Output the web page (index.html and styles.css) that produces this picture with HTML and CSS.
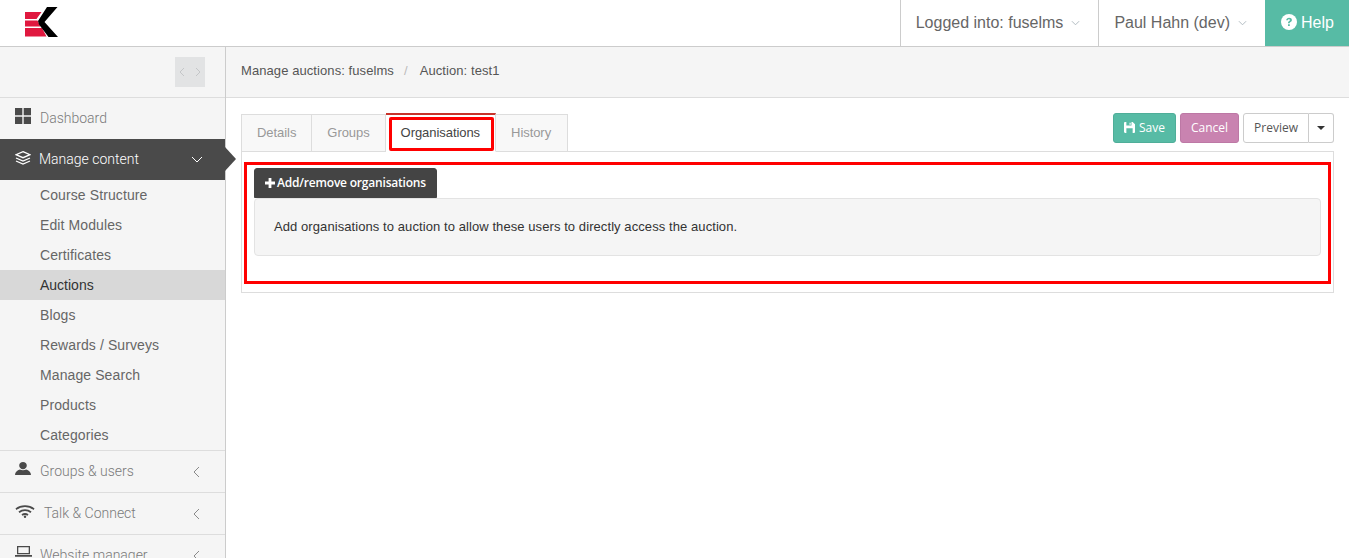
FILE: index.html
```html
<!DOCTYPE html>
<html lang="en">
<head>
<meta charset="utf-8">
<title>Manage auctions</title>
<link rel="stylesheet" href="styles.css">
</head>
<body>
<header class="topbar">
  <a class="logo" href="#" aria-label="Logo">
    <svg width="34" height="31" viewBox="0 0 34 31">
      <path class="logo-red" d="M0 5H16.500L11.500 12H0ZM0 13.500H12.500L15.500 19.500H0ZM0 21H17L21.500 29.500H0Z"/>
      <path class="logo-black" d="M22 0H32.500L19.500 15L33 30H23.500L14 17.500 13 14Z"/>
    </svg>
  </a>
  <div class="top-right">
    <div class="top-item">Logged into: fuselms
      <svg class="chev-sm" viewBox="0 0 10 6"><path d="M1 1l4 4 4-4"/></svg>
    </div>
    <div class="top-item">Paul Hahn (dev)
      <svg class="chev-sm" viewBox="0 0 10 6"><path d="M1 1l4 4 4-4"/></svg>
    </div>
    <div class="top-help">
      <svg class="help-icon" viewBox="0 0 16 16"><circle cx="8" cy="8" r="8"/><path class="help-q" d="M5.200 6.200C5.300 4.600 6.500 3.700 8.100 3.700c1.600 0 2.800.9 2.800 2.300 0 1.100-.6 1.600-1.400 2.100-.6.4-.8.6-.8 1.200H7c0-1.200.4-1.700 1.200-2.200.5-.3.8-.6.8-1 0-.5-.4-.8-1-.8-.7 0-1 .4-1.100 1ZM7 10.200h1.800V12H7Z"/></svg>
      Help
    </div>
  </div>
</header>
<div class="shell">
  <aside class="sidebar">
    <div class="side-top">
      <div class="collapse">
        <svg viewBox="0 0 6 10"><path d="M5 1L1 5l4 4"/></svg>
        <svg viewBox="0 0 6 10"><path d="M1 1l4 4-4 4"/></svg>
      </div>
    </div>
    <a class="nav-item" href="#">
      <svg class="nav-icon grid" viewBox="0 0 16 16"><path d="M0 0h7.300v7.300H0ZM8.700 0H16v7.300H8.700ZM0 8.700h7.300V16H0ZM8.700 8.700H16V16H8.700Z"/></svg>
      <span class="nav-label">Dashboard</span>
    </a>
    <a class="nav-item nav-active" href="#">
      <svg class="nav-icon layers" viewBox="0 0 16 14"><path d="M8 .7l7 3-7 3-7-3ZM1 7l7 3 7-3M1 10l7 3 7-3"/></svg>
      <span class="nav-label">Manage content</span>
      <svg class="nav-chev" viewBox="0 0 12 7"><path d="M1 1l5 5 5-5"/></svg>
    </a>
    <ul class="sub-nav">
      <li>Course Structure</li>
      <li>Edit Modules</li>
      <li>Certificates</li>
      <li class="sub-active">Auctions</li>
      <li>Blogs</li>
      <li>Rewards / Surveys</li>
      <li>Manage Search</li>
      <li>Products</li>
      <li>Categories</li>
    </ul>
    <a class="nav-item nav-line" href="#">
      <svg class="nav-icon person" viewBox="0 0 16 13"><path d="M8 0c2.200 0 3.800 1.500 3.800 3.400S10.200 7.200 8 7.200 4.200 5.300 4.200 3.400 5.800 0 8 0ZM0 13C0 10 2.300 8.200 4.800 7.500c1.800 1 4.600 1 6.400 0C13.700 8.200 16 10 16 13Z"/></svg>
      <span class="nav-label">Groups &amp; users</span>
      <svg class="nav-chev-left" viewBox="0 0 7 12"><path d="M6 1L1 6l5 5"/></svg>
    </a>
    <a class="nav-item nav-line" href="#">
      <svg class="nav-icon wifi" viewBox="0 0 20 13"><path class="wifi-arc" d="M1 4.200C6 .2 14 .2 19 4.200M4 7.200C7.500 4.500 12.500 4.500 16 7.200M7 10C8.800 8.800 11.200 8.800 13 10"/><circle cx="10" cy="11.800" r="1.200"/></svg>
      <span class="nav-label">Talk &amp; Connect</span>
      <svg class="nav-chev-left" viewBox="0 0 7 12"><path d="M6 1L1 6l5 5"/></svg>
    </a>
    <a class="nav-item nav-line" href="#">
      <svg class="nav-icon laptop" viewBox="0 0 17 12"><path fill-rule="evenodd" d="M2 0h13v8.300H2Zm1.300 1.300v5.700h10.400V1.300ZM0 9h17v1.800H0Z"/></svg>
      <span class="nav-label">Website manager</span>
      <svg class="nav-chev-left" viewBox="0 0 7 12"><path d="M6 1L1 6l5 5"/></svg>
    </a>
  </aside>
  <main class="main">
    <nav class="breadcrumb">
      <span>Manage auctions: fuselms</span>
      <span class="crumb-sep">/</span>
      <span>Auction: test1</span>
    </nav>
    <div class="content">
      <div class="tab-row">
        <ul class="tabs">
          <li>Details</li>
          <li>Groups</li>
          <li class="tab-active">Organisations<span class="mark mark-tab"></span></li>
          <li>History</li>
        </ul>
        <div class="actions">
          <button class="btn btn-save">
            <svg class="save-icon" viewBox="0 0 14 14"><path fill-rule="evenodd" d="M0 1.500C0 .7.700 0 1.500 0H11l3 3v9.500c0 .8-.7 1.500-1.500 1.500h-11C.7 14 0 13.300 0 12.500ZM3 0h6.500v4.500H3ZM7 1v2.500h1.500V1ZM3 8h8v6H3Z"/></svg>
            Save
          </button>
          <button class="btn btn-cancel">Cancel</button>
          <div class="split">
            <button class="btn btn-preview">Preview</button>
            <button class="btn btn-caret"><span class="caret"></span></button>
          </div>
        </div>
      </div>
      <section class="panel">
        <span class="mark mark-panel"></span>
        <button class="btn btn-add"><svg class="plus" viewBox="0 0 10 10"><path d="M3.600 0h2.800v3.600H10v2.800H6.400V10H3.600V6.400H0V3.600h3.600Z"/></svg>Add/remove organisations</button>
        <div class="well">Add organisations to auction to allow these users to directly access the auction.</div>
      </section>
    </div>
  </main>
</div>
</body>
</html>
```
FILE: styles.css
```css
* { box-sizing: border-box; }
html, body { margin: 0; height: 558px; overflow: hidden; }
body { font-family: "Liberation Sans", Arial, sans-serif; color: #333; background: #fff; }
a { text-decoration: none; color: inherit; }
ul { list-style: none; margin: 0; padding: 0; }
button { font: inherit; cursor: pointer; }

.topbar { height: 47px; display: flex; justify-content: space-between; border-bottom: 1px solid #ccc; background: #fff; }
.logo { margin: 7px 0 0 25px; display: block; height: 31px; }
.logo-red { fill: #e0183f; }
.logo-black { fill: #000; }
.top-right { display: flex; height: 46px; }
.top-item { display: flex; align-items: center; gap: 8px; padding: 0 18px 0 15px; border-left: 1px solid #ccc; font-size: 16px; color: #666; white-space: nowrap; }
.chev-sm { width: 9px; height: 6px; fill: none; stroke: #a9b4bb; stroke-width: 1; }
.top-help { width: 84px; display: flex; align-items: center; gap: 4px; padding-left: 16px; background: #57bba5; color: #fff; font-size: 16px; }
.help-icon { width: 16px; height: 16px; fill: #fff; margin-top: -2px; }
.help-q { fill: #57bba5; }

.shell { display: flex; height: 511px; }
.sidebar { width: 226px; flex: none; background: #f5f5f5; border-right: 1px solid #ccc; font-family: Roboto, sans-serif; font-size: 14px; position: relative; z-index: 1; height: 511px; }
.side-top { height: 51px; border-bottom: 1px solid #ddd; display: flex; justify-content: flex-end; align-items: flex-start; padding: 10px 20px 0 0; }
.collapse { width: 30px; height: 30px; background: #e2e3e4; display: flex; align-items: center; justify-content: center; gap: 10px; }
.collapse svg { width: 6px; height: 10px; fill: none; stroke: #c4c6c8; stroke-width: 1; }

.nav-item { height: 41px; display: flex; align-items: center; padding: 0 15px; color: #7a7a7a; font-weight: 300; font-size: 14px; position: relative; }
.nav-icon { width: 16px; height: 16px; flex: none; fill: #4a4a4a; margin: -3px 9px 0 0; }
.nav-label { flex: 1; white-space: nowrap; padding-bottom: 2px; }
.nav-active { background: #4a4a4a; color: #fff; }
.grid { margin-top: -5px; }
.nav-active .layers { fill: none; stroke: #fff; stroke-width: 1.300; width: 16px; height: 14px; margin-right: 8px; margin-top: -4px; }
.nav-active::after { content: ""; position: absolute; left: 225px; top: 8px; border-left: 11px solid #4a4a4a; border-top: 12px solid transparent; border-bottom: 12px solid transparent; }
.nav-chev { width: 12px; height: 7px; fill: none; stroke: #fff; stroke-width: 1; margin-right: 7px; }
.nav-chev-left { width: 7px; height: 12px; fill: none; stroke: #8a8a8a; stroke-width: 1; margin-right: 10px; }
.nav-line { height: 42px; border-top: 1px solid #ddd; }
.person { height: 13px; margin-top: -6px; }
.wifi { width: 20px; height: 13px; margin-right: 9px; margin-top: -4px; }
.wifi-arc { fill: none; stroke: #4a4a4a; stroke-width: 1.800; }
.laptop { width: 17px; height: 12px; margin: -7px 8px 0 0; }
.sub-nav li { height: 30px; line-height: 30px; padding-left: 40px; color: #666; font-family: "Liberation Sans", Arial, sans-serif; font-size: 14px; letter-spacing: .1px; }
.sub-nav .sub-active { background: #d8d8d8; color: #333; letter-spacing: 0; }

.main { flex: 1; min-width: 0; }
.breadcrumb { height: 51px; background: #f5f5f5; border-bottom: 1px solid #ddd; padding: 0 15px 4px; display: flex; align-items: center; font-size: 13px; letter-spacing: .08px; color: #555; }
.crumb-sep { margin: 0 12px 0 10px; color: #bbb; }
.content { padding: 15px 15px 0; }
.tab-row { display: flex; justify-content: space-between; align-items: flex-start; height: 39px; }
.tabs { display: flex; margin-top: 1px; position: relative; z-index: 1; }
.tabs li { height: 38px; line-height: 36px; padding: 0 15px; border: 1px solid #ddd; border-left-width: 0; background: #f8f8f8; color: #999; font-size: 13px; letter-spacing: -.06px; white-space: nowrap; position: relative; }
.tabs li:first-child { border-left-width: 1px; }
.tabs li:last-child { padding-right: 16px; }
.tabs .tab-active { background: #fff; color: #444; border-bottom-color: #fff; border-top: 2px solid #c8332b; margin-top: -1px; height: 39px; }
.actions { display: flex; gap: 4px; align-items: flex-start; }
.btn { height: 30px; border-radius: 3px; border: 1px solid transparent; font-family: "Open Sans", sans-serif; font-size: 12px; padding: 0 10px 2px; display: inline-flex; align-items: center; justify-content: center; white-space: nowrap; }
.btn-save { width: 63px; background: #57bba5; color: #fff; border-color: #4fae99; gap: 4px; }
.save-icon { width: 13px; height: 13px; fill: #fff; }
.btn-cancel { width: 59px; background: #c983b0; color: #fff; border-color: #bd78a5; }
.split { display: flex; }
.btn-preview { width: 66px; background: #fff; color: #555; border-color: #ccc; border-radius: 3px 0 0 3px; }
.btn-caret { width: 25px; background: #fff; border-color: #ccc; border-left-width: 0; border-radius: 0 3px 3px 0; padding: 0; }
.caret { border-top: 4px solid #333; border-left: 4px solid transparent; border-right: 4px solid transparent; }

.panel { position: relative; height: 142px; border: 1px solid #ddd; padding: 16px 12px 0; margin-top: -1px; }
.btn-add { width: 183px; height: 30px; background: #444; color: #fff; border-color: #444; font-size: 12px; font-weight: 600; letter-spacing: -.2px; padding: 0 0 1px; gap: 2px; display: flex; border-radius: 3px 3px 0 0; }
.plus { width: 10px; height: 10px; fill: #fff; }
.well { height: 58px; border: 1px solid #e3e3e3; border-radius: 4px; background: #f5f5f5; padding: 0 19px 2px; display: flex; align-items: center; font-size: 13px; letter-spacing: .08px; color: #333; }

.mark { position: absolute; border: 3px solid #f00; pointer-events: none; }
.mark-tab { left: 3px; top: 2px; width: 105px; height: 34px; border-radius: 2px; }
.mark-panel { left: 2px; top: 10px; width: 1087px; height: 122px; }
```
